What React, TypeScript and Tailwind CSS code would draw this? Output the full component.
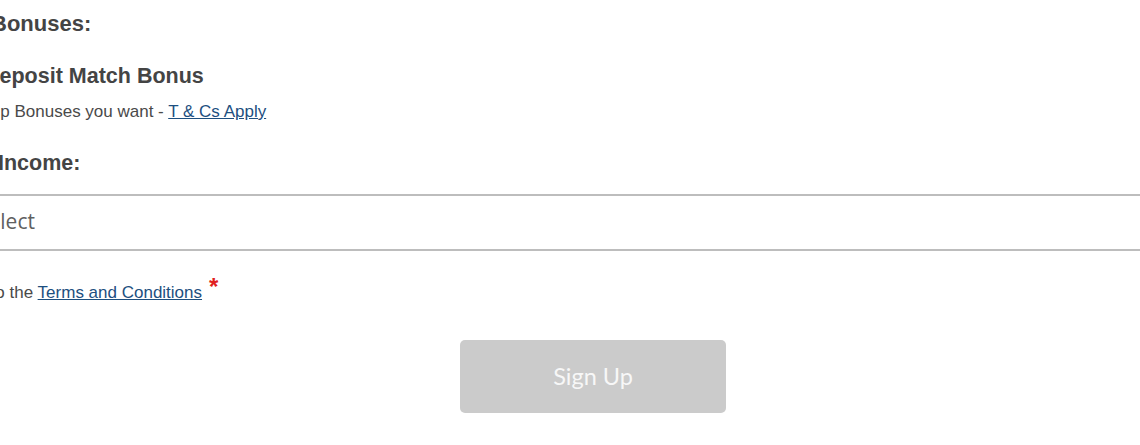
import React from "react";

export default function App() {
  const arial = { fontFamily: '"Liberation Sans", Arial, sans-serif' };
  return (
    <div className="w-[1140px] h-[445px] overflow-hidden bg-white">
      <div className="-ml-[46px] w-[1278px] pt-[10px] flex flex-col text-[#454545]" style={arial}>
        <h3 className="pl-[37px] text-[22px] leading-[28px] font-bold text-[#444]">Bonuses:</h3>
        <h4 className="mt-[25px] pl-[30px] text-[21.5px] leading-[27px] font-bold text-[#444]">Deposit Match Bonus</h4>
        <p className="mt-[11px] pl-0 text-[17px] leading-[22px] text-[#4a4a4a]">
          Pick up Bonuses you want -{" "}
          <a href="#" className="text-[#1d4f7f] underline">T &amp; Cs Apply</a>
        </p>
        <h4 className="mt-[27px] pl-[44px] text-[21.5px] leading-[27px] font-bold text-[#444]">Income:</h4>
        <div className="mt-[17px] h-[57px] border-y-2 border-[#bdbdbd] flex items-center pl-[23px] pb-[1px]">
          <span className="text-[21px] text-[#606060]" style={{ fontFamily: '"Open Sans", Lato, sans-serif' }}>Select</span>
        </div>
        <p className="mt-[31px] text-[17px] leading-[22px] text-[#4a4a4a]">
          <span className="-ml-[21px]">I agree to the </span>
          <a href="#" className="text-[#1d4f7f] underline">Terms and Conditions</a>
          <span className="ml-[7px] text-[#e02020] text-[24px] font-bold align-top relative -top-[6px]">*</span>
        </p>
        <div className="mt-[36px] flex justify-center">
          <button
            type="button"
            className="w-[266px] h-[73px] rounded-[5px] bg-[#cbcbcb] text-[#f7f7f7] text-[23.5px]"
            style={{ fontFamily: 'Lato, "Open Sans", sans-serif' }}
          >
            Sign Up
          </button>
        </div>
      </div>
    </div>
  );
}
